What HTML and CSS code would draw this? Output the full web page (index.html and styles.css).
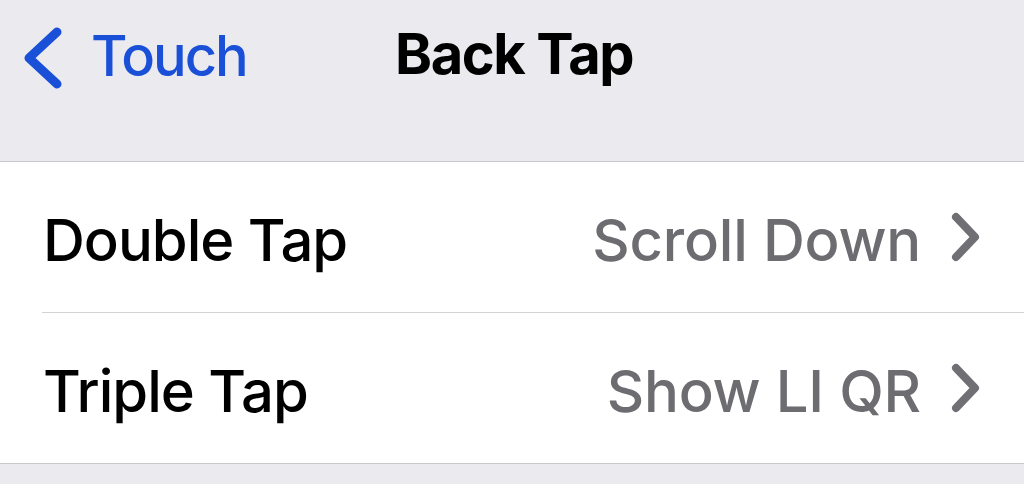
FILE: index.html
```html
<!DOCTYPE html>
<html>
<head>
<meta charset="utf-8">
<link rel="stylesheet" href="styles.css">
</head>
<body>
<div class="page">
  <header class="nav">
    <div class="back">
      <svg class="back-icon" width="46" height="64" viewBox="0 0 46 64">
        <polyline points="37,6 9,32 37,58" fill="none" stroke="#1a4fd8" stroke-width="9" stroke-linecap="round" stroke-linejoin="round"/>
      </svg>
      <span class="back-label">Touch</span>
    </div>
    <h1 class="title">Back Tap</h1>
  </header>
  <section class="group">
    <div class="row">
      <span class="label">Double Tap</span>
      <span class="value">Scroll Down</span>
      <svg class="chev" width="34" height="52" viewBox="0 0 34 52">
        <polyline points="8,6 27,26 8,46" fill="none" stroke="#6f6f74" stroke-width="8" stroke-linecap="round" stroke-linejoin="round"/>
      </svg>
    </div>
    <div class="sep"></div>
    <div class="row">
      <span class="label">Triple Tap</span>
      <span class="value">Show LI QR</span>
      <svg class="chev" width="34" height="52" viewBox="0 0 34 52">
        <polyline points="8,6 27,26 8,46" fill="none" stroke="#6f6f74" stroke-width="8" stroke-linecap="round" stroke-linejoin="round"/>
      </svg>
    </div>
  </section>
</div>
</body>
</html>
```

FILE: styles.css
```css
html, body {
  margin: 0;
  padding: 0;
  background: #eaeaef;
  width: 1024px;
  height: 484px;
  overflow: hidden;
  font-family: Inter, "Liberation Sans", sans-serif;
}
.page {
  display: flex;
  flex-direction: column;
}
.nav {
  height: 162px;
  box-sizing: border-box;
  padding: 22px 0 0 20px;
  display: flex;
  align-items: flex-start;
  border-bottom: 1px solid #c9c9cd;
}
.back {
  display: flex;
  align-items: center;
  width: 375px;
}
.back-icon {
  display: block;
  margin-top: 4px;
}
.back-label {
  color: #1a4fd8;
  font-size: 56px;
  font-weight: 500;
  margin-left: 25px;
  letter-spacing: -2px;
  line-height: 62px;
}
.title {
  margin: 0;
  font-size: 56px;
  font-weight: 700;
  color: #000;
  line-height: 64px;
  letter-spacing: -1.4px;
}
.group {
  background: #fff;
  border-bottom: 1px solid #c9c9cd;
}
.row {
  height: 150px;
  box-sizing: border-box;
  padding: 6px 42px 0 43px;
  display: flex;
  align-items: center;
}
.label {
  font-size: 58px;
  font-weight: 500;
  color: #000;
  flex: 1;
  letter-spacing: -1px;
}
.value {
  font-size: 58px;
  font-weight: 500;
  color: #6c6c71;
  letter-spacing: -0.2px;
}
.chev {
  display: block;
  margin-left: 27px;
  margin-top: -6px;
}
.sep {
  height: 1px;
  background: #d3d3d6;
  margin-left: 42px;
}
```
